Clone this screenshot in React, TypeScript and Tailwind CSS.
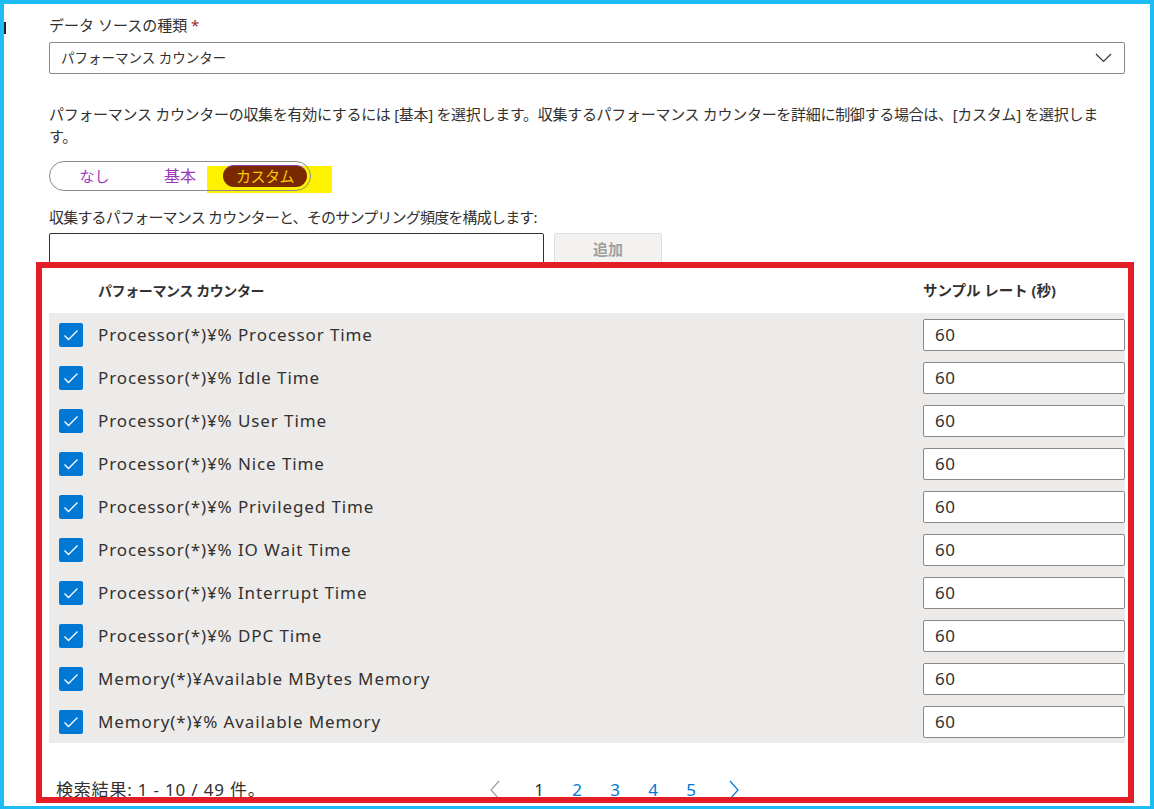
import React from 'react';

const counters = [
  'Processor(*)¥% Processor Time',
  'Processor(*)¥% Idle Time',
  'Processor(*)¥% User Time',
  'Processor(*)¥% Nice Time',
  'Processor(*)¥% Privileged Time',
  'Processor(*)¥% IO Wait Time',
  'Processor(*)¥% Interrupt Time',
  'Processor(*)¥% DPC Time',
  'Memory(*)¥Available MBytes Memory',
  'Memory(*)¥% Available Memory',
];

function Check() {
  return (
    <div className="w-6 h-6 rounded-[2px] bg-[#0078d4] flex items-center justify-center shrink-0">
      <svg width="24" height="24" viewBox="0 0 24 24" fill="none">
        <polyline points="5.5,12.5 9.5,16.5 18.5,7.5" stroke="white" strokeWidth="1.3" />
      </svg>
    </div>
  );
}

function CounterRow({ name }: Readonly<{ name: string }>) {
  return (
    <div className="h-[43px] flex items-center">
      <div className="w-[49px] pl-[10px] flex items-center">
        <Check />
      </div>
      <span className="flex-1 text-[17px] tracking-[0.9px] text-[#323130]">{name}</span>
      <input
        readOnly
        defaultValue="60"
        className="w-[202px] h-[32px] border border-[#8a8886] rounded-[2px] bg-white pl-[11px] text-[17px] tracking-[0.5px] text-[#323130] outline-none"
      />
    </div>
  );
}

export default function App() {
  return (
    <div className="relative w-[1154px] h-[809px] overflow-hidden bg-white border-[#1ebcf5] border-t-4 border-l-4 border-r-4 border-b-[3px] font-['Noto_Sans','Noto_Sans_CJK_JP',sans-serif] text-[#323130]">
      {/* 左端の黒い線 */}
      <div className="absolute left-0 top-[18px] w-[2px] h-[12px] bg-[#222]" />

      <div className="pl-[45px] pr-[25px] pt-[10px]">
        <p className="text-[15px] leading-[22px]">
          データ ソースの種類 <span className="text-[#a4262c]">*</span>
        </p>

        <div className="mt-[6px] h-[32px] border border-[#8a8886] rounded-[2px] flex items-center justify-between pl-[11px] pr-[12px]">
          <span className="text-[13.5px]">パフォーマンス カウンター</span>
          <svg width="17" height="10" viewBox="0 0 17 10" fill="none">
            <polyline points="1,1 8.5,8.5 16,1" stroke="#323130" strokeWidth="1.1" />
          </svg>
        </div>

        <p className="mt-[29px] text-[15px] leading-[22px] tracking-[-0.3px]">
          パフォーマンス カウンターの収集を有効にするには [基本] を選択します。収集するパフォーマンス カウンターを詳細に制御する場合は、[カスタム] を選択します。
        </p>

        <div className="relative mt-[14px] w-[262px] h-[30px] flex items-center">
          <div className="absolute left-[158px] top-[5px] w-[125px] h-[27px] bg-[#fff200]" />
          <div className="relative w-[91px] text-center text-[15px] text-[#9b38b8]">なし</div>
          <div className="relative w-[80px] text-center text-[16px] text-[#9b38b8]">基本</div>
          <div className="relative ml-[3px] w-[84px] h-[22px] rounded-full bg-[#7a2800] border-t border-[#8e3ba8] flex items-center justify-center text-[15px] tracking-[-0.5px] text-[#f5cc00]">
            カスタム
          </div>
          <div className="absolute inset-0 rounded-full border border-[#8a8886] pointer-events-none" />
        </div>

        <p className="mt-[15px] text-[15px] leading-[22px] tracking-[-0.8px]">
          収集するパフォーマンス カウンターと、そのサンプリング頻度を構成します:
        </p>

        <div className="mt-[5px] flex gap-[10px]">
          <input className="w-[495px] h-[32px] border border-[#323130] rounded-[2px] outline-none" />
          <button className="w-[108px] h-[32px] rounded-[2px] bg-[#f3f2f1] border border-[#e1dfdd] text-[15px] font-semibold text-[#a19f9d]">
            追加
          </button>
        </div>

        {/* 赤枠 */}
        <div className="relative -mt-[3px] -ml-[13px] w-[1098px] h-[541px] overflow-hidden border-[6px] border-[#e41e26] bg-white pl-[7px] pr-[3px]">
          <div className="h-[45px] flex items-center">
            <div className="w-[49px]" />
            <span className="flex-1 text-[14px] font-bold tracking-[-0.4px]">パフォーマンス カウンター</span>
            <span className="w-[202px] text-[14.5px] font-bold">サンプル レート (秒)</span>
          </div>

          <div className="bg-[#edebe9]">
            {counters.map((c) => (
              <CounterRow key={c} name={c} />
            ))}
          </div>

          <div className="pt-[36px] flex items-center text-[17px] leading-[22px]">
            <span className="w-[427px] pl-[7px] tracking-[0.8px]">検索結果: 1 - 10 / 49 件。</span>
            <div className="w-[38px] flex justify-center">
              <svg width="12" height="20" viewBox="0 0 12 20" fill="none">
                <polyline points="10,1 2,10 10,19" stroke="#a19f9d" strokeWidth="1.2" />
              </svg>
            </div>
            <div className="ml-[6px] flex text-[17px]">
              <span className="w-[38px] text-center text-[#323130]">1</span>
              <span className="w-[38px] text-center text-[#0078d4]">2</span>
              <span className="w-[38px] text-center text-[#0078d4]">3</span>
              <span className="w-[38px] text-center text-[#0078d4]">4</span>
              <span className="w-[38px] text-center text-[#0078d4]">5</span>
            </div>
            <div className="ml-[5px] w-[38px] flex justify-center">
              <svg width="12" height="20" viewBox="0 0 12 20" fill="none">
                <polyline points="2,1 10,10 2,19" stroke="#0078d4" strokeWidth="1.2" />
              </svg>
            </div>
          </div>
        </div>
      </div>
    </div>
  );
}
